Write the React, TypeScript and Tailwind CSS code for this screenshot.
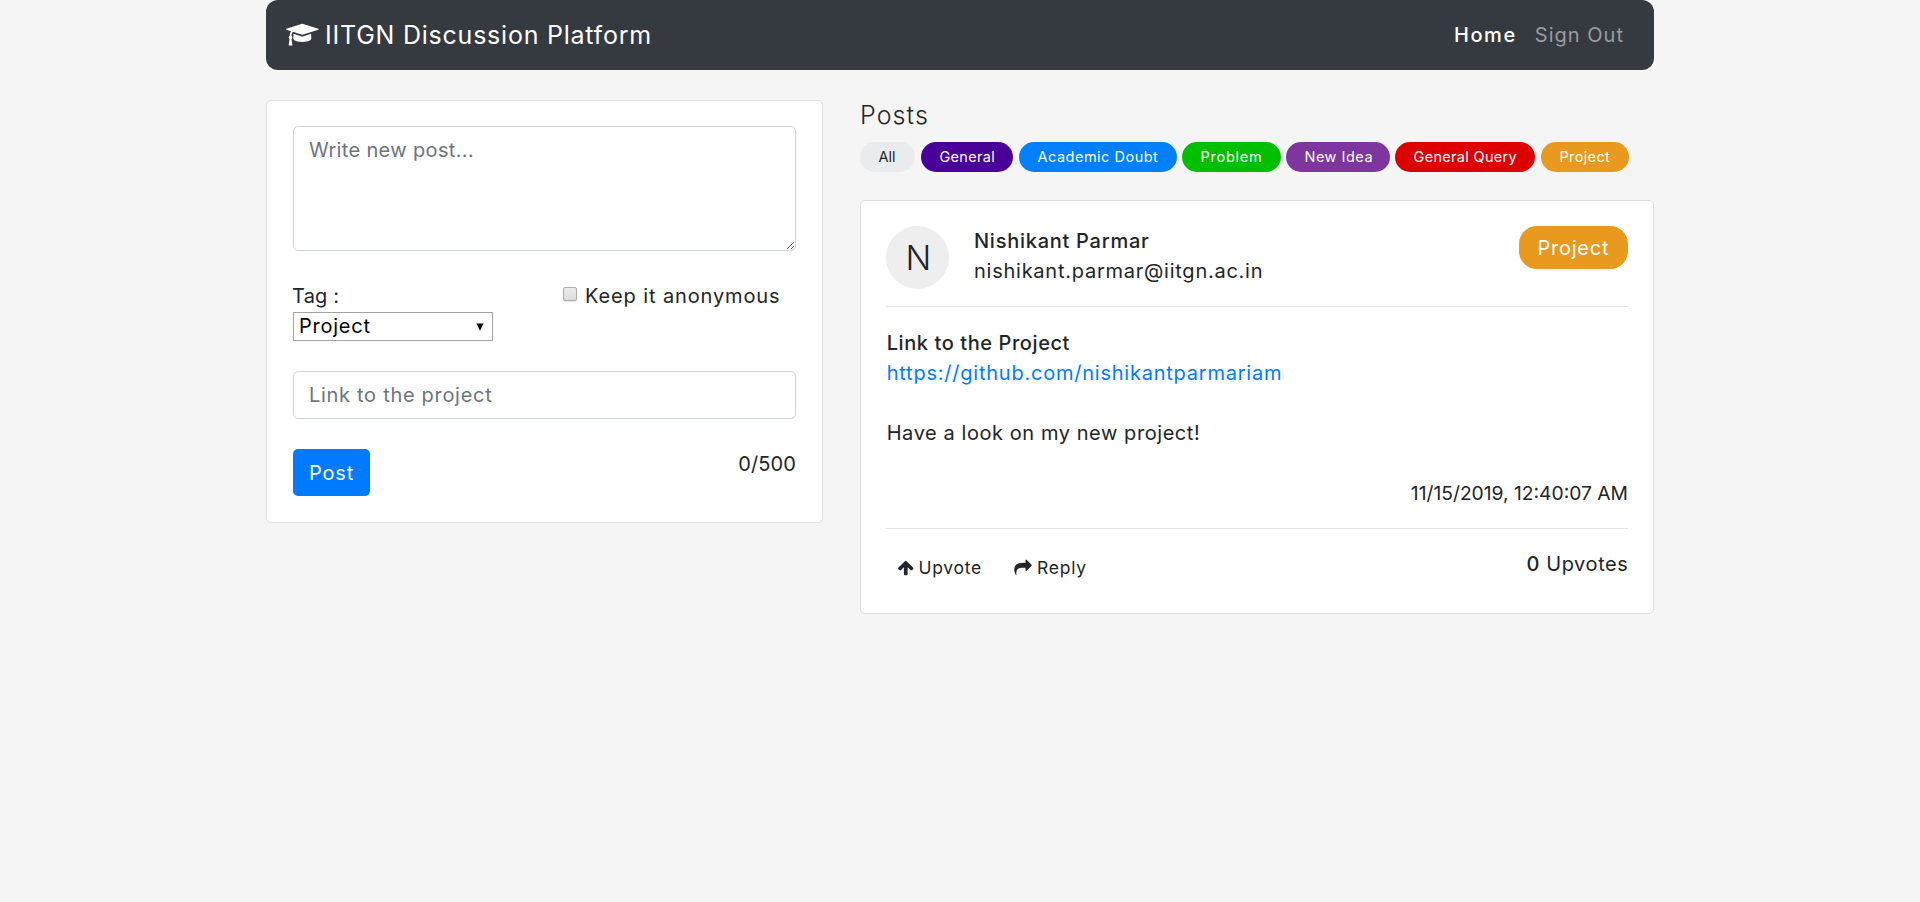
import type { ReactNode } from "react";

function Glyph({ d, box, className }: { d: string; box: string; className: string }) {
  return (
    <svg viewBox={box} className={className} fill="currentColor" aria-hidden="true">
      <path d={d} />
    </svg>
  );
}

const CAP =
  "M1774 836l18 316q4 69-82 128t-235 93.500-323 34.500-323-34.500-235-93.500-82-128l18-316 574 181q22 7 48 7t48-7zM2304 512q0 23-22 31l-1120 352q-4 1-10 1t-10-1l-652-206q-43 34-71 111.500t-34 178.500q63 36 63 109 0 69-58 107l58 433q2 14-8 25-9 11-24 11h-192q-15 0-24-11-10-11-8-25l58-433q-58-38-58-107 0-73 65-111 11-207 98-330l-333-104q-22-8-22-31t22-31l1120-352q4-1 10-1t10 1l1120 352q22 8 22 31z";
const ARROW_UP =
  "M1675 971q0 51-37 90l-75 75q-38 38-91 38-54 0-90-38l-294-293v704q0 52-37.500 84.500t-90.500 32.500h-128q-53 0-90.500-32.500t-37.500-84.500v-704l-294 293q-36 38-90 38t-90-38l-75-75q-38-38-38-90 0-53 38-91l651-651q35-37 90-37 54 0 91 37l651 651q37 39 37 91z";
const SHARE =
  "M1792 640q0 26-19 45l-512 512q-19 19-45 19t-45-19-19-45v-256h-224q-98 0-175.500 6t-154 21.500-133 42.500-105.500 69.500-80 101-48.500 138.500-17.500 181q0 55 5 123 0 6 2.500 23.500t2.500 26.500q0 15-8.500 25t-23.500 10q-16 0-28-17-7-9-13-22t-13.500-30-10.500-24q-127-285-127-451 0-199 53-333 162-403 875-403h224v-256q0-26 19-45t45-19 45 19l512 512q19 19 19 45z";

const tags = [
  { name: "All", style: "w-[55px] mr-[6px] bg-[#e9ebed] text-[#212529]" },
  { name: "General", style: "w-[92px] mr-[6px] bg-[#480099] text-white tracking-[0.3px]" },
  { name: "Academic Doubt", style: "w-[158px] mr-[5px] bg-[#007fff] text-white tracking-[0.5px]" },
  { name: "Problem", style: "w-[99px] mr-[5px] bg-[#00bf00] text-white tracking-[0.75px]" },
  { name: "New Idea", style: "w-[104px] mr-[5px] bg-[#7f359e] text-white tracking-[0.5px]" },
  { name: "General Query", style: "w-[140px] mr-[6px] bg-[#dd0000] text-white tracking-[0.32px]" },
  { name: "Project", style: "w-[88px] bg-[#e8991e] text-white tracking-[0.35px]" },
];

function Card({ children, className }: { children: ReactNode; className: string }) {
  return <div className={`rounded-[5px] border border-[#dfdfdf] bg-white ${className}`}>{children}</div>;
}

function Navbar() {
  return (
    <nav className="flex h-[70px] items-center justify-between rounded-[12px] bg-[#343a40] pl-5 pr-[30px]">
      <a className="flex items-center text-[25px] leading-[30px] tracking-[0.76px] text-white">
        <Glyph d={CAP} box="0 0 2304 1792" className="mr-[6.500px] h-[25.4px] w-[32.6px]" />
        IITGN Discussion Platform
      </a>
      <div className="flex leading-[30px]">
        <a className="mr-[18px] font-medium tracking-[1.6px] text-white">Home</a>
        <a className="tracking-[1.02px] text-[#999c9f]">Sign Out</a>
      </div>
    </nav>
  );
}

function Composer() {
  return (
    <Card className="flex h-[423px] w-[557px] flex-col px-[26px] pt-[25px]">
      <textarea
        placeholder="Write new post..."
        className="block h-[125px] w-[503px] shrink-0 rounded-[5px] border border-[#ced4da] px-[15px] py-2 leading-[30px] tracking-[0.35px] placeholder:text-[#6c757d]"
      />
      <div className="mt-[30px] flex h-[61px] items-start">
        <div className="w-[270px]">
          <div className="-ml-px h-[31px] leading-[30px] tracking-[0.2px]">Tag :</div>
          <div className="flex h-[29px] w-[200px] items-center justify-between border border-[#a3a3a3] bg-white pl-[5px] pr-[8px] text-black">
            <span className="leading-[27px] tracking-[0.75px]">Project</span>
            <svg viewBox="0 0 8 8" className="h-2 w-2" fill="currentColor">
              <path d="M0.500 0.500h7L4 7.700z" />
            </svg>
          </div>
        </div>
        <label className="flex items-start leading-[30px] tracking-[0.88px]">
          <span className="mr-[8px] mt-[6px] h-[14px] w-[14px] rounded-[2px] border border-[#adadad] bg-linear-to-b from-[#ececec] to-[#dcdcdc] shadow-[0_1px_1px_rgba(0,0,0,0.12)]" />
          Keep it anonymous
        </label>
      </div>
      <input
        placeholder="Link to the project"
        className="mt-[29px] h-12 w-[503px] shrink-0 rounded-[5px] border border-[#ced4da] px-[15px] tracking-[0.7px] placeholder:text-[#6c757d]"
      />
      <div className="mt-[30px] flex items-start justify-between">
        <button className="h-[47px] w-[77px] rounded-[5px] bg-[#007bff] leading-[30px] tracking-[0.8px] text-white">
          Post
        </button>
        <span className="leading-[30px] tracking-[0.1px]">0/500</span>
      </div>
    </Card>
  );
}

function Post() {
  return (
    <Card className="mt-7 flex h-[414px] w-[794px] flex-col px-[25px] pt-[25px]">
      <div className="flex h-[81px] items-start border-b border-[#e4e4e4]">
        <div className="flex h-[63px] w-[63px] items-center justify-center rounded-full bg-[#eeeeee] pb-[1px] pl-[2px] text-[34px] font-light">
          N
        </div>
        <div className="ml-[25px] grow leading-[30px]">
          <div className="font-medium tracking-[0.74px]">Nishikant Parmar</div>
          <div className="tracking-[0.75px]">nishikant.parmar@iitgn.ac.in</div>
        </div>
        <div className="h-[43px] w-[109px] rounded-[18px] bg-[#e8991e] pl-[18.500px] leading-[45px] tracking-[0.75px] text-white">
          Project
        </div>
      </div>
      <div className="mt-[21px] pl-[0.700px] leading-[30px]">
        <div className="font-medium tracking-[0.58px]">Link to the Project</div>
        <a className="block tracking-[0.77px] text-[#007bff]">https://github.com/nishikantparmariam</a>
        <div className="mt-[30px] tracking-[0.57px]">Have a look on my new project!</div>
        <div className="mt-[30px] text-right text-[19.250px]">11/15/2019, 12:40:07 AM</div>
      </div>
      <div className="mt-5 flex items-start justify-between border-t border-[#e4e4e4] pt-5">
        <div className="flex pl-[11px] pt-[4px] text-[17.500px] leading-[30px]">
          <span className="flex w-[117px] items-center tracking-[0.72px]">
            <Glyph d={ARROW_UP} box="0 0 1792 1792" className="mr-[4px] h-[17.500px] w-[17.500px]" />
            Upvote
          </span>
          <span className="flex items-center tracking-[0.75px]">
            <Glyph d={SHARE} box="0 0 1792 1792" className="mr-[5px] h-[17.500px] w-[18px]" />
            Reply
          </span>
        </div>
        <div className="-mr-[0.500px] leading-[30px] tracking-[0.6px]">
          <b className="font-medium">0</b> Upvotes
        </div>
      </div>
    </Card>
  );
}

export default function App() {
  return (
    <div className="min-h-screen bg-[#f5f5f5] font-['Inter',sans-serif] text-[20px] text-[#212529]">
      <div className="mx-auto w-[1388px]">
        <Navbar />
        <main className="mt-[30px] flex items-start justify-between">
          <Composer />
          <section className="w-[794px]">
            <h5 className="h-[42px] text-[25px] font-light leading-[31px] tracking-[1.1px]">Posts</h5>
            <div className="flex">
              {tags.map((t) => (
                <span
                  key={t.name}
                  className={`h-[30px] shrink-0 whitespace-nowrap rounded-full pl-[18.500px] text-[14.500px] leading-[30px] ${t.style}`}
                >
                  {t.name}
                </span>
              ))}
            </div>
            <Post />
          </section>
        </main>
      </div>
    </div>
  );
}
